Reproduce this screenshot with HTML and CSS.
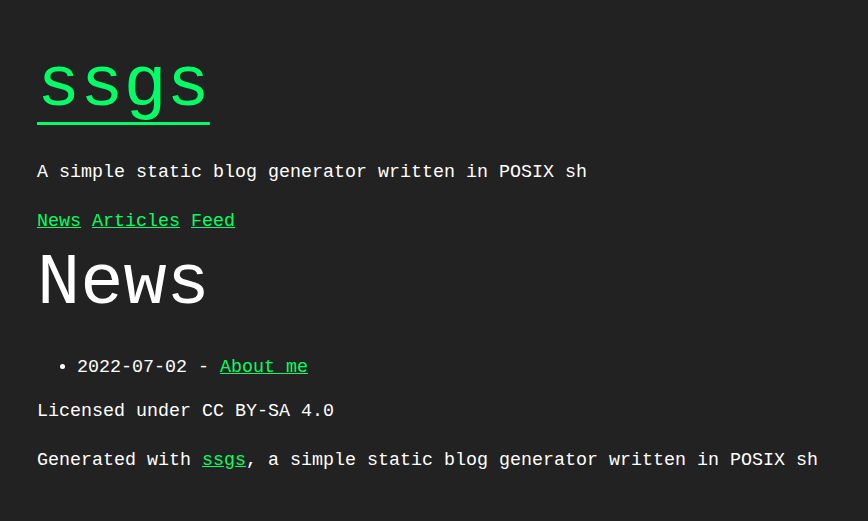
FILE: index.html
```html
<!DOCTYPE html>
<html lang="en">
<head>
<meta charset="utf-8">
<title>ssgs</title>
<link rel="stylesheet" href="styles.css">
</head>
<body>
<header class="site-header">
  <h1 class="site-title"><a href="#">ssgs</a></h1>
  <p class="tagline">A simple static blog generator written in POSIX sh</p>
  <nav class="nav"><a href="#">News</a> <a href="#">Articles</a> <a href="#">Feed</a></nav>
</header>
<main class="content">
  <h1 class="page-title">News</h1>
  <ul class="posts">
    <li>2022-07-02 - <a href="#">About me</a></li>
  </ul>
</main>
<footer class="site-footer">
  <p class="license">Licensed under CC BY-SA 4.0</p>
  <p class="generated">Generated with <a href="#">ssgs</a>, a simple static blog generator written in POSIX sh</p>
</footer>
</body>
</html>
```

FILE: styles.css
```css
html {
  background: #222222;
}
body {
  margin: 0;
  padding: 0 37px;
  background: #222222;
  color: #ffffff;
  font-family: "Liberation Mono", monospace;
  font-size: 18.333px;
  line-height: 31.5px;
}
a {
  color: #00ff66;
}
.site-title {
  margin: 50px 0 0;
  font-size: 72px;
  line-height: 72px;
  font-weight: normal;
}
.site-title a {
  text-underline-position: under;
  text-decoration-thickness: 3px;
}
.tagline {
  margin: 34.5px 0 0;
}
.nav {
  margin: 17.5px 0 0;
}
.page-title {
  margin: 10.9px 0 0;
  font-size: 72px;
  line-height: 72px;
  font-weight: normal;
}
.posts {
  margin: 32.1px 0 0;
  padding-left: 40px;
}
.license {
  margin: 13px 0 0;
}
.generated {
  margin: 17.5px 0 0;
}
```
